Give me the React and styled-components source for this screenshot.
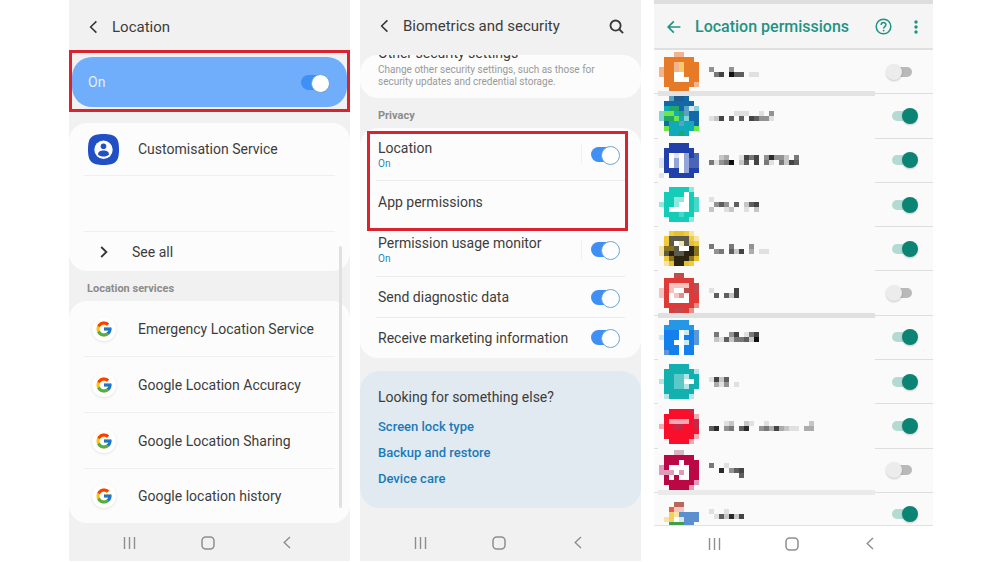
import React, { useState } from 'react';
import styled, { createGlobalStyle, css } from 'styled-components';
import { FcGoogle } from 'react-icons/fc';

const GlobalStyle = createGlobalStyle`
  * {
    box-sizing: border-box;
  }

  body {
    margin: 0;
    background: #ffffff;
    font-family: Roboto, 'Liberation Sans', sans-serif;
    color: #3c3c3c;
  }

  button {
    display: flex;
    align-items: center;
    justify-content: center;
    padding: 0;
    border: none;
    background: none;
    color: inherit;
    font: inherit;
    cursor: pointer;
  }
`;

const Page = styled.div`
  display: grid;
  grid-template-columns: 281fr 281fr 282fr;
  column-gap: 10px;
  min-height: 100vh;
  padding: 0 67px 1px 69px;
`;

const Phone = styled.section`
  display: flex;
  flex-direction: column;
  min-width: 0;
  background: ${(props) => (props.$plain ? '#ffffff' : '#f1f1f1')};
  margin-left: ${(props) => (props.$plain ? '3px' : '0')};
`;

const Header = styled.header`
  display: flex;
  align-items: center;
  height: ${(props) => props.$height}px;
  padding: ${(props) => (props.$height > 50 ? '0 17px 0 16px' : '4px 16px 0')};
`;

const IconButton = styled.button`
  width: 16px;
  height: 24px;
  margin-right: 11px;
`;

const Title = styled.h1`
  flex: 1;
  margin: 0;
  font-size: 15px;
  line-height: 20px;
  font-weight: 400;
  white-space: nowrap;
`;

const Screen = styled.main`
  position: relative;
  flex: 1;
`;

const NavBar = styled.nav`
  display: flex;
  align-items: center;
  justify-content: space-between;
  height: ${(props) => (props.$short ? '35px' : '37px')};
  padding: 0 51px 0 48px;
  color: #8e8e8e;
`;

const NavButton = styled.button`
  width: 24px;
  height: 24px;
`;

const Card = styled.div`
  background: #fcfcfc;
  border-radius: 18px;
`;

const CardList = styled.ul`
  margin: 0;
  padding: 0;
  list-style: none;
  background: #fcfcfc;
  border-radius: 18px;
`;

const Highlight = styled.div`
  margin-bottom: 11px;
  padding: 4px 0 2px;
  border: 3px solid #d9242f;
  overflow: hidden;
`;

const HighlightOverlay = styled.div`
  position: absolute;
  top: 79px;
  left: 7px;
  right: 13px;
  height: 100px;
  border: 3px solid #d9242f;
  pointer-events: none;
`;

const MasterRow = styled.label`
  display: flex;
  align-items: center;
  justify-content: space-between;
  height: 50px;
  padding: 0 17px 0 16px;
  border-radius: 20px;
  background: #70aefb;
  color: #e2f0ff;
  font-size: 14px;
`;

const ServiceItem = styled.li`
  display: flex;
  height: ${(props) => props.$height || 56}px;
  margin: 0 15px;
  border-bottom: 1px solid #efefef;

  &:last-child {
    border-bottom: none;
  }
`;

const ServiceButton = styled.button`
  flex: 1;
  justify-content: flex-start;
  gap: ${(props) => (props.$compact ? '13px' : '19px')};
  font-size: 14px;
  white-space: nowrap;
`;

const IconSlot = styled.span`
  display: flex;
  align-items: center;
  justify-content: center;
  width: 31px;
  height: 31px;
  margin-left: 4px;
`;

const GoogleBadge = styled.span`
  display: flex;
  align-items: center;
  justify-content: center;
  width: 24px;
  height: 24px;
  border-radius: 50%;
  background: #ffffff;
  box-shadow: 0 1px 3px rgba(0, 0, 0, 0.1);
`;

const SectionLabel = styled.h2`
  margin: 0;
  padding: 5px 18px 0;
  font-size: 11px;
  line-height: 25px;
  font-weight: 700;
  color: #8c8c8c;
`;

const ScrollThumb = styled.div`
  position: absolute;
  top: 196px;
  bottom: 16px;
  right: 8px;
  width: 3px;
  border-radius: 2px;
  background: #e0e0e0;
`;

const ClippedCard = styled(Card)`
  display: flex;
  flex-direction: column;
  justify-content: flex-end;
  height: 43px;
  margin-top: 3px;
  padding: 0 18px 10px;
  overflow: hidden;
  font-size: 10px;
  line-height: 12px;
  color: #9a9a9a;
  white-space: nowrap;
`;

const ClippedTitle = styled.div`
  flex: none;
  font-size: 14px;
  line-height: 22px;
  color: #3c3c3c;
`;

const SettingRow = styled.label`
  display: flex;
  align-items: center;
  height: ${(props) => props.$height}px;
  margin: 0 16px;
  padding: 0 5px 0 2px;
  border-bottom: 1px solid ${(props) => (props.$line ? '#ebebeb' : 'transparent')};
`;

const SettingText = styled.span`
  flex: 1;
  font-size: 14px;
  line-height: 18px;
  white-space: nowrap;
`;

const SettingStatus = styled.span`
  display: block;
  font-size: 10px;
  line-height: 13px;
  color: #1c87b5;
`;

const Split = styled.span`
  width: 1px;
  height: 20px;
  margin-right: 9px;
  background: #f0f0f0;
`;

const HelpCard = styled.div`
  margin-top: 13px;
  padding: 17px 18px 16px;
  border-radius: 20px;
  background: #e2eaf1;
`;

const HelpTitle = styled.h2`
  margin: 0 0 8px;
  font-size: 14px;
  line-height: 18px;
  font-weight: 400;
`;

const HelpLink = styled.a`
  display: block;
  font-size: 13px;
  line-height: 26px;
  font-weight: 500;
  color: #1a7ab8;
  text-decoration: none;
`;

const Switch = styled.input`
  position: relative;
  flex: none;
  appearance: none;
  margin: 0;
  width: 29px;
  height: 17px;
  cursor: pointer;

  &::before {
    content: '';
    position: absolute;
    inset: 1px 2px 1px 0;
    border-radius: 8px;
    background: #a9a9a9;
  }

  &::after {
    content: '';
    position: absolute;
    top: 0;
    left: 0;
    width: 17px;
    height: 17px;
    border-radius: 50%;
    background: #ffffff;
    border: 1px solid #6ba6cf;
  }

  &:checked::before {
    background: #3f8ff4;
  }

  &:checked::after {
    left: auto;
    right: 0;
  }

  ${(props) =>
    props.$material &&
    css`
      width: 32px;
      height: 16px;

      &::before {
        inset: 3px 6px 3px 6px;
        background: #b9b9b9;
      }

      &::after {
        width: 16px;
        height: 16px;
        border: none;
        background: #ececec;
        box-shadow: 0 1px 2px rgba(0, 0, 0, 0.2);
      }

      &:checked::before {
        background: #b3dbd4;
      }

      &:checked::after {
        background: #0b8474;
      }
    `}
`;

const TealHeader = styled.header`
  display: flex;
  align-items: center;
  height: 50px;
  padding: 1px 8px 0 12px;
  border-top: 4px solid #dedede;
  border-bottom: 2px solid #e0e0e0;
  background: #f5f5f5;
  color: #1f9383;
`;

const TealTitle = styled(Title)`
  margin-left: 2px;
  font-size: 16px;
  font-weight: 500;
`;

const ActionButton = styled.button`
  width: 18px;
  height: 24px;
  margin-left: 15px;
`;

const AppList = styled.ul`
  flex: 1;
  display: grid;
  grid-template-rows: repeat(10, minmax(44px, 1fr)) 32px;
  margin: 0;
  padding: 0;
  list-style: none;
  overflow: hidden;
  background: #fafafa;
  border-bottom: 1px solid #e2e2e2;
`;

const AppItem = styled.li`
  display: grid;
  grid-template-columns: 4px 1fr 58px;
  grid-template-rows: 1fr 1px;
`;

const AppRow = styled.label`
  grid-column: 1 / -1;
  display: flex;
  align-items: center;
  min-height: 43px;
  padding: 0 15px 0 5px;
`;

const AppName = styled.span`
  display: flex;
  flex: 1;
  margin-left: 10px;
`;

const Line = styled.span`
  height: 1px;
  background: #dedede;
`;

const Band = styled.span`
  align-self: center;
  height: 5px;
  background: ${(props) => props.$color || 'transparent'};
`;

const PALETTE = {
  O: '#e67a26', o: '#f0b48e', y: '#f7cb68', w: '#ffffff',
  b: '#1268a8', d: '#1d5c8c', t: '#10aab8', g: '#1fa866', l: '#6fe646', c: '#86d2dc', s: '#5aa2c2',
  N: '#2140aa', n: '#4a64b8', m: '#93a6dc', e: '#dde4f6',
  T: '#14cdb9', u: '#8ee8dd', v: '#48d8c9',
  Y: '#f0cc3c', Z: '#e6c02e', K: '#2a2410', k: '#5c5a4c', q: '#8a7420', x: '#f6e4a4',
  R: '#e03a38', r: '#c04a4e', p: '#f6c4c0', i: '#e09088',
  F: '#1480ee', f: '#2498e6', h: '#5a98d8', j: '#c8ecf0',
  A: '#12b0ae', a: '#5cc8c8', z: '#b4e4e6',
  C: '#f90f2c', D: '#c82846', E: '#f4a8b4',
  M: '#bb0844', P: '#e29aba', Q: '#f8dce6', W: '#d8b4c4',
  1: '#e8604c', 2: '#b86858', 3: '#f0d060', 4: '#40a048', 5: '#5a90d0', 6: '#d8e6f4',
};

// Small mosaics: one character is one 5px cell, dots are empty
const Mosaic = ({ rows, grey, cells }) => {
  const width = cells || Math.max(...rows.map((row) => row.length));
  return (
    <svg width={width * 5} height={rows.length * 5} viewBox={`0 0 ${width} ${rows.length}`} shapeRendering="crispEdges" aria-hidden="true">
      {rows.map((row, y) =>
        row.split('').map((cell, x) => {
          if (cell === '.') return null;
          const tone = 250 - Number(cell) * 26;
          const fill = grey ? `rgb(${tone}, ${tone}, ${tone})` : PALETTE[cell];
          return <rect key={`${x}-${y}`} x={x} y={y} width="1" height="1" fill={fill} />;
        })
      )}
    </svg>
  );
};

const apps = [
  {
    on: false,
    band: '#e3e3e3',
    icon: ['...oo...', '.OOOOOO.', '.OOoyOOO', 'oOOoyOOO', 'oOOwwOOO', '.OOwwwOO', '.OOOOOOo', '..OOOO..'],
    name: ['4...4.....', '.57.966.11'],
  },
  {
    on: true,
    icon: ['..sddb..', '.bbbbbb.', '.tggbsec', 'clltgsbb', 'cggltcbb', '.bttsttb', '.ltttttl', '..ttgt..'],
    name: ['.....111..1.4', '127.6.6.76441'],
  },
  {
    on: true,
    icon: ['..NNNN..', '.NNNNNN.', '.NwewmNn', 'eNwmwmnn', 'eNwmwmnn', '.NNNwmNN', 'e.NNNNN.'],
    name: ['..23..1757.48442.5', '51459.26.7.51.5276'],
  },
  {
    on: true,
    icon: ['..TTTTu.', '.TTTTwT.', '.TTuuwTv', 'uTTuwwTv', '.TwwwwTv', '.TTTvTT.', '..TTTTu.'],
    name: ['1.........', '.464.6.267', '2..12..1.2'],
  },
  {
    on: true,
    icon: ['..YZZYx.', '.YkkkkYx', '.YkwxkZY', 'xqqkwwKq', 'xkKkkKKq', '.YqKKKqZ', '.xZKKZY.'],
    name: ['5...5...4...', '.45.627.3.11'],
  },
  {
    on: false,
    band: '#e0e0e0',
    icon: ['...rr...', '.RRRRRR.', '.RppppRr', 'pRpwwrRr', 'pRwpiwRR', '.RwwwwRR', '.RRRRRRi', '..RrrRi.'],
    name: ['1....7', '.6.627'],
  },
  {
    on: true,
    icon: ['..ffff..', '.ffffff.', '.FFFwjFh', 'jFFFwFFh', '.FFwwjFh', '.FFFwFF.', '.hFFwFF.'],
    name: ['.5..47.157', '.216255629'],
  },
  {
    on: true,
    icon: ['..AAAA..', '.AAAAAAz', '.AAaazAA', 'zAAaawwA', '.AAaazAA', '.AAAAAA.', '.zAAAAz.'],
    name: ['1726..', '.314.1'],
  },
  {
    on: true,
    icon: ['..CCCCD.', '.CCCCCCE', '.CEEEECD', 'ECCDDCCD', '.CCCCCCC', '.CCCCCCE', '..CCCCE.'],
    name: ['...12..21..1........2', '68.45.68..45373211.33'],
  },
  {
    on: false,
    band: '#eaeaea',
    icon: ['...WW...', '.MMMMMM.', '.MMMwMMM', 'PMwwwwMM', 'PPPwPwMM', '.MwMwwMM', '.MMMMMMP', '..MMMMP.'],
    name: ['5..1...', '..8.467', '......6'],
  },
  {
    on: true,
    icon: ['...22...', '..1pp...', '..3x5555', '.x3w6555', '..44455.'],
    name: ['1..1...', '.162827'],
  },
];

const BackIcon = () => (
  <svg width="10" height="14" viewBox="0 0 10 14" fill="none" stroke="#333333" strokeWidth="1.5" aria-hidden="true">
    <path d="M8.4 1.4 L2.6 7 L8.4 12.6" />
  </svg>
);

const SearchIcon = () => (
  <svg width="15" height="15" viewBox="0 0 16 16" fill="none" stroke="#3a3a3a" strokeWidth="2" aria-hidden="true">
    <circle cx="7" cy="7" r="5.4" />
    <path d="M10.9 10.9 L15 15" />
  </svg>
);

const ProfileIcon = () => (
  <svg width="31" height="31" viewBox="0 0 31 31" aria-hidden="true">
    <path d="M15.5 0 C27.5 0 31 3.5 31 15.5 C31 27.5 27.5 31 15.5 31 C3.5 31 0 27.5 0 15.5 C0 3.5 3.5 0 15.5 0Z" fill="#2150c4" />
    <circle cx="15.5" cy="15.8" r="9.2" fill="#ffffff" />
    <path d="M21.5 7.5 L23.5 9.5 M7.5 22 L9.5 24" stroke="#2150c4" strokeWidth="1.6" />
    <circle cx="15.5" cy="12.2" r="2.8" fill="#2150c4" />
    <path d="M10 20.6 C10 17.6 12.2 16.4 15.5 16.4 C18.8 16.4 21 17.6 21 20.6 C19.6 22.2 17.8 22.6 15.5 22.6 C13.2 22.6 11.4 22.2 10 20.6Z" fill="#2150c4" />
  </svg>
);

const SystemNav = ({ short }) => (
  <NavBar $short={short} aria-label="System">
    <NavButton aria-label="Recent apps">
      <svg width="13" height="14" viewBox="0 0 13 14" stroke="currentColor" strokeWidth="1.4" aria-hidden="true">
        <path d="M1.5 1 V13 M6.5 1 V13 M11.5 1 V13" />
      </svg>
    </NavButton>
    <NavButton aria-label="Home">
      <svg width="14" height="14" viewBox="0 0 14 14" fill="none" stroke="currentColor" strokeWidth="1.5" aria-hidden="true">
        <rect x="1" y="1" width="12" height="12" rx="3.8" />
      </svg>
    </NavButton>
    <NavButton aria-label="Back">
      <svg width="8" height="13" viewBox="0 0 8 13" fill="none" stroke="currentColor" strokeWidth="1.4" aria-hidden="true">
        <path d="M7 1 L1.2 6.5 L7 12" />
      </svg>
    </NavButton>
  </NavBar>
);

const Toggle = ({ initial = true, ...rest }) => {
  const [on, setOn] = useState(initial);
  return <Switch type="checkbox" checked={on} onChange={() => setOn(!on)} {...rest} />;
};

const services = [
  'Emergency Location Service',
  'Google Location Accuracy',
  'Google Location Sharing',
  'Google location history',
];

const LocationScreen = () => (
  <Phone>
    <Header $height={50}>
      <IconButton aria-label="Back"><BackIcon /></IconButton>
      <Title>Location</Title>
    </Header>
    <Screen>
      <Highlight>
        <MasterRow>
          On
          <Toggle />
        </MasterRow>
      </Highlight>
      <CardList>
        <ServiceItem $height={53}>
          <ServiceButton>
            <IconSlot><ProfileIcon /></IconSlot>
            Customisation Service
          </ServiceButton>
        </ServiceItem>
        <ServiceItem $height={56} />
        <ServiceItem $height={39}>
          <ServiceButton $compact>
            <IconSlot>
              <svg width="8" height="12" viewBox="0 0 8 12" fill="none" stroke="#333333" strokeWidth="1.8" aria-hidden="true">
                <path d="M1.2 1 L6.4 6 L1.2 11" />
              </svg>
            </IconSlot>
            See all
          </ServiceButton>
        </ServiceItem>
      </CardList>
      <SectionLabel>Location services</SectionLabel>
      <CardList>
        {services.map((name, index) => (
          <ServiceItem key={name} $height={index === 3 ? 54 : 56}>
            <ServiceButton>
              <IconSlot><GoogleBadge><FcGoogle size={18} /></GoogleBadge></IconSlot>
              {name}
            </ServiceButton>
          </ServiceItem>
        ))}
      </CardList>
      <ScrollThumb />
    </Screen>
    <SystemNav />
  </Phone>
);

const SecurityScreen = () => (
  <Phone>
    <Header $height={52}>
      <IconButton aria-label="Back"><BackIcon /></IconButton>
      <Title>Biometrics and security</Title>
      <button aria-label="Search"><SearchIcon /></button>
    </Header>
    <Screen>
      <ClippedCard>
        <ClippedTitle>Other security settings</ClippedTitle>
        <div>Change other security settings, such as those for</div>
        <div>security updates and credential storage.</div>
      </ClippedCard>
      <SectionLabel>Privacy</SectionLabel>
      <Card>
        <SettingRow $height={53} $line>
          <SettingText>Location<SettingStatus>On</SettingStatus></SettingText>
          <Split />
          <Toggle />
        </SettingRow>
        <SettingRow as="div" $height={42}>
          <SettingText>App permissions</SettingText>
        </SettingRow>
        <SettingRow $height={54} $line>
          <SettingText>Permission usage monitor<SettingStatus>On</SettingStatus></SettingText>
          <Split />
          <Toggle />
        </SettingRow>
        <SettingRow $height={41} $line>
          <SettingText>Send diagnostic data</SettingText>
          <Toggle />
        </SettingRow>
        <SettingRow $height={40}>
          <SettingText>Receive marketing information</SettingText>
          <Toggle />
        </SettingRow>
      </Card>
      <HighlightOverlay />
      <HelpCard>
        <HelpTitle>Looking for something else?</HelpTitle>
        <HelpLink href="#lock">Screen lock type</HelpLink>
        <HelpLink href="#backup">Backup and restore</HelpLink>
        <HelpLink href="#care">Device care</HelpLink>
      </HelpCard>
    </Screen>
    <SystemNav />
  </Phone>
);

const PermissionsScreen = () => (
  <Phone $plain>
    <TealHeader>
      <IconButton aria-label="Back">
        <svg width="14" height="14" viewBox="0 0 14 14" fill="none" stroke="currentColor" strokeWidth="1.7" aria-hidden="true">
          <path d="M13.4 7 H1.4 M6.8 1.4 L1.2 7 L6.8 12.6" />
        </svg>
      </IconButton>
      <TealTitle>Location permissions</TealTitle>
      <ActionButton aria-label="Help">
        <svg width="17" height="17" viewBox="0 0 17 17" fill="none" stroke="currentColor" strokeWidth="1.5" aria-hidden="true">
          <circle cx="8.5" cy="8.5" r="7.3" />
          <path d="M6.2 7 C6.2 3.7 10.9 3.8 10.9 6.8 C10.9 8.6 8.6 8.6 8.6 10.6" />
          <circle cx="8.6" cy="12.6" r="0.9" fill="currentColor" stroke="none" />
        </svg>
      </ActionButton>
      <ActionButton aria-label="More options">
        <svg width="4" height="14" viewBox="0 0 4 14" fill="currentColor" aria-hidden="true">
          <circle cx="2" cy="2" r="1.7" />
          <circle cx="2" cy="7" r="1.7" />
          <circle cx="2" cy="12" r="1.7" />
        </svg>
      </ActionButton>
    </TealHeader>
    <AppList>
      {apps.map((app, index) => (
        <AppItem key={index}>
          <AppRow>
            <Mosaic rows={app.icon} cells={8} />
            <AppName><Mosaic rows={app.name} grey /></AppName>
            <Toggle initial={app.on} $material aria-label={`App ${index + 1}`} />
          </AppRow>
          <Line />
          <Band $color={app.band} />
          <Line />
        </AppItem>
      ))}
    </AppList>
    <SystemNav short />
  </Phone>
);

const App = () => (
  <>
    <GlobalStyle />
    <Page>
      <LocationScreen />
      <SecurityScreen />
      <PermissionsScreen />
    </Page>
  </>
);

export default App;
